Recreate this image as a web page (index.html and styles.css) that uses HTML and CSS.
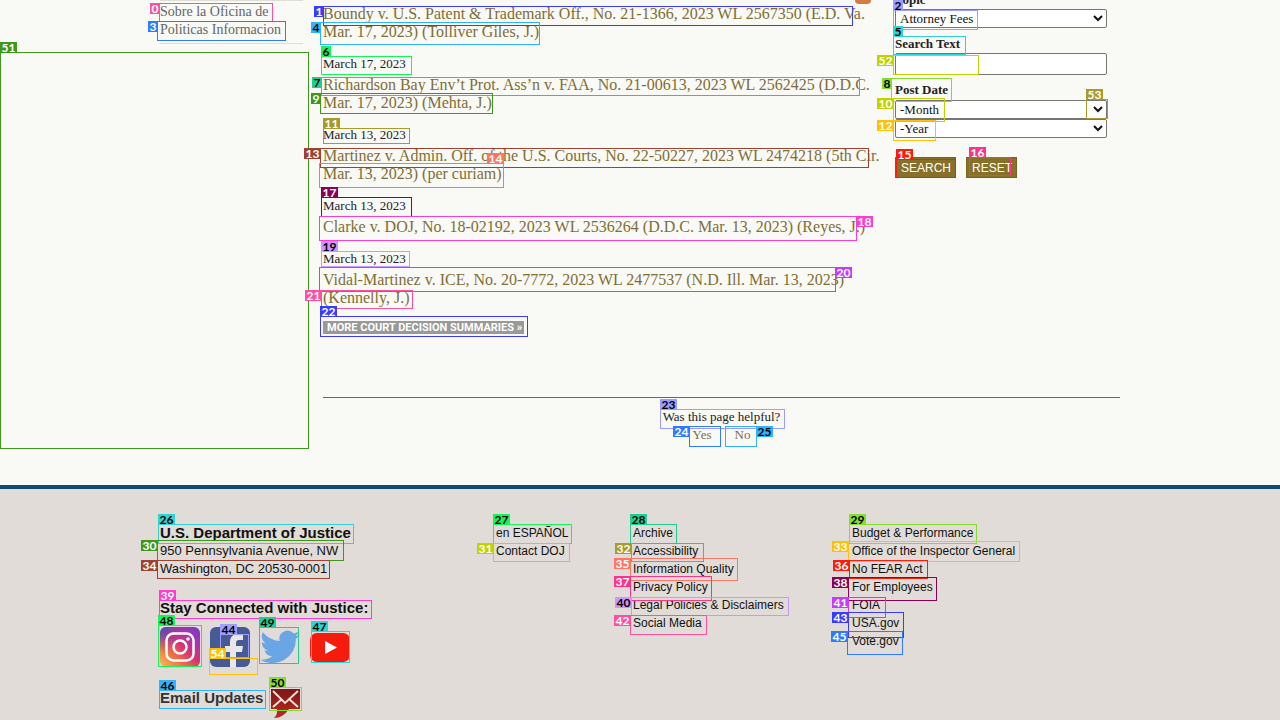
FILE: index.html
```html
<!DOCTYPE html>
<html lang="en">
<head>
<meta charset="utf-8">
<title>Court Decisions</title>
<link rel="stylesheet" href="styles.css">
</head>
<body>
<main class="page">
  <div class="columns">
    <nav class="sidebar">
      <a href="#">Sobre la Oficina de Politicas Informacion</a>
    </nav>
    <section class="decisions">
      <span class="feed"></span>
      <article><a href="#">Boundy v. U.S. Patent &amp; Trademark Off., No. 21-1366, 2023 WL 2567350 (E.D. Va. Mar. 17, 2023) (Tolliver Giles, J.)</a></article>
      <article><time>March 17, 2023</time><a href="#">Richardson Bay Env’t Prot. Ass’n v. FAA, No. 21-00613, 2023 WL 2562425 (D.D.C. Mar. 17, 2023) (Mehta, J.)</a></article>
      <article><time>March 13, 2023</time><a href="#">Martinez v. Admin. Off. of the U.S. Courts, No. 22-50227, 2023 WL 2474218 (5th Cir. Mar. 13, 2023) (per curiam)</a></article>
      <article><time>March 13, 2023</time><a href="#">Clarke v. DOJ, No. 18-02192, 2023 WL 2536264 (D.D.C. Mar. 13, 2023) (Reyes, J.)</a></article>
      <article><time>March 13, 2023</time><a href="#">Vidal-Martinez v. ICE, No. 20-7772, 2023 WL 2477537 (N.D. Ill. Mar. 13, 2023) (Kennelly, J.)</a></article>
      <a class="more" href="#">MORE COURT DECISION SUMMARIES »</a>
    </section>
    <form class="search">
      <label for="topic">Topic</label>
      <select id="topic"><option>Attorney Fees</option></select>
      <label class="text-label" for="text">Search Text</label>
      <input id="text" type="text">
      <label class="date-label" for="month">Post Date</label>
      <select id="month"><option>-Month</option></select>
      <select id="year" aria-label="Year"><option>-Year</option></select>
      <div class="actions">
        <button type="submit">SEARCH</button>
        <button type="reset">RESET</button>
      </div>
    </form>
  </div>
  <div class="feedback">
    <p>Was this page helpful?</p>
    <div class="answers"><a href="#">Yes</a><a href="#">No</a></div>
  </div>
</main>
<footer class="footer">
  <div class="footer-inner">
    <div class="contact">
      <h2>U.S. Department of Justice</h2>
      <p>950 Pennsylvania Avenue, NW</p>
      <p>Washington, DC 20530-0001</p>
      <h2 class="stay">Stay Connected with Justice:</h2>
      <div class="social">
        <a href="#" aria-label="Instagram"><svg viewBox="0 0 40 40">
          <defs>
            <linearGradient id="ig" x1="0" y1="1" x2="1" y2="0"><stop offset="0" stop-color="#fec053"/><stop offset=".3" stop-color="#f2703f"/><stop offset=".55" stop-color="#d93175"/><stop offset=".8" stop-color="#9b36b7"/><stop offset="1" stop-color="#7638c0"/></linearGradient>
            <radialGradient id="igb" cx="0" cy="0" r=".65"><stop offset="0" stop-color="#3b4ec8"/><stop offset="1" stop-color="#7a3bbd" stop-opacity="0"/></radialGradient>
          </defs>
          <rect width="40" height="40" rx="6" fill="url(#ig)"/><rect width="40" height="40" rx="6" fill="url(#igb)"/>
          <rect x="6.500" y="6.500" width="27" height="27" rx="7" fill="none" stroke="#fff" stroke-width="2.500"/>
          <circle cx="20" cy="20" r="6.500" fill="none" stroke="#fff" stroke-width="2.500"/><circle cx="28" cy="12" r="1.800" fill="#fff"/>
        </svg></a>
        <a href="#" aria-label="Facebook"><svg viewBox="0 0 40 40"><rect width="40" height="40" rx="6" fill="#465a93"/><path d="M20 40V25h-5v-6h5v-4c0-5 3-8 8-8h5v6h-4c-2 0-3 1-3 3v3h7l-1 6h-6v15z" fill="#e9e7e8"/></svg></a>
        <a href="#" aria-label="Twitter"><svg viewBox="0 0 24 24"><path fill="#6aa5e5" d="M24 4.600a10 10 0 0 1-2.800.8 5 5 0 0 0 2.100-2.700 10 10 0 0 1-3.100 1.200 4.900 4.900 0 0 0-8.400 4.500A14 14 0 0 1 1.700 3.200a4.900 4.900 0 0 0 1.500 6.500 4.900 4.900 0 0 1-2.200-.6 4.900 4.900 0 0 0 3.900 4.900 5 5 0 0 1-2.200.1 4.900 4.900 0 0 0 4.600 3.400A10 10 0 0 1 0 19.500 14 14 0 0 0 21.500 7.100 10 10 0 0 0 24 4.600z"/></svg></a>
        <a href="#" aria-label="YouTube"><svg viewBox="0 0 40 40"><rect y="6" width="40" height="29" rx="7" fill="#f61c0d"/><path d="M15 14v13l12-6.500z" fill="#fff"/></svg></a>
      </div>
      <a class="email" href="#">Email Updates
        <svg viewBox="0 0 32 32"><defs><linearGradient id="em" x2="0" y2="1"><stop stop-color="#7c1714"/><stop offset="1" stop-color="#c02a22"/></linearGradient></defs>
          <path d="M1 2h29v20H19Q13 31 4 31q4-4 3-9H1z" fill="url(#em)"/>
          <path d="M3 4l12 12L28 4M3 20l9-8M28 20l-9-8" fill="none" stroke="#f6e7e4" stroke-width="1.800"/></svg>
      </a>
    </div>
    <div class="links">
      <a href="#">en ESPAÑOL</a><a href="#">Contact DOJ</a>
    </div>
    <div class="links">
      <a href="#">Archive</a><a href="#">Accessibility</a><a href="#">Information Quality</a><a href="#">Privacy Policy</a><a href="#">Legal Policies &amp; Disclaimers</a><a href="#">Social Media</a>
    </div>
    <div class="links">
      <a href="#">Budget &amp; Performance</a><a href="#">Office of the Inspector General</a><a href="#">No FEAR Act</a><a href="#">For Employees</a><a href="#">FOIA</a><a href="#">USA.gov</a><a href="#">Vote.gov</a>
    </div>
  </div>
</footer>
<div class="marks" id="marks"></div>
<script src="marks.js"></script>
</body>
</html>
```
FILE: styles.css
```css
* { box-sizing: border-box; }

body {
  margin: 0;
  min-height: 100vh;
  display: flex;
  flex-direction: column;
  position: relative;
  overflow: hidden;
  background: #f9f9f5;
  color: #222;
  font: 13px/18px "Liberation Serif", serif;
}

a { text-decoration: none; }
p, h2 { margin: 0; }

.page, .footer-inner {
  width: 100%;
  max-width: 960px;
  margin: 0 auto;
}

.page { padding-bottom: 41px; }

.columns {
  display: grid;
  grid-template-columns: 163px 1fr 225px;
  column-gap: 0;
  align-items: start;
}

.sidebar {
  margin-right: 20px;
  border-top: 1px solid #deded4;
  border-bottom: 1px solid #deded4;
  padding: 2px 20px 4px 0;
  font-size: 14px;
}
.sidebar a { color: #666; }

.decisions {
  position: relative;
  display: flex;
  flex-direction: column;
  gap: 14px;
  padding: 5px 8px 0 0;
}
.decisions article {
  display: flex;
  flex-direction: column;
  gap: 3px;
}
.decisions article a {
  color: #7f6e35;
  font-size: 16px;
}

.feed {
  position: absolute;
  right: 24px;
  top: -12px;
  width: 16px;
  height: 16px;
  border-radius: 4px;
  background: #d37a45;
}

.decisions .more {
  align-self: flex-start;
  padding: 0 2px 0 4px;
  background: #999;
  color: #fff;
  font: bold 11px/13px Roboto, sans-serif;
}

.search {
  display: flex;
  flex-direction: column;
  margin-top: -9px;
  padding-right: 13px;
}
.search label { font-weight: bold; }
.search .text-label { margin-top: 7px; }
.search .date-label { margin: 6px 0 1px; }
.search select, .search input {
  width: 100%;
  height: 19px;
  padding: 0;
  border: 1px solid #767676;
  border-radius: 2px;
  background-color: #fff;
  color: #111;
  font: 13px "Liberation Serif", serif;
}
.search input { height: 22px; }

.actions {
  display: flex;
  gap: 10px;
  margin-top: 19px;
}
.actions button {
  height: 21px;
  padding: 0 4px 0 5px;
  border: 1px solid #7a621c;
  background: #87702a;
  color: #fff;
  font: 12px "Liberation Sans", sans-serif;
}

.feedback {
  margin: 63px 0 0 163px;
  padding-top: 10px;
  border-top: 1px solid #666;
  text-align: center;
}
.answers {
  display: flex;
  justify-content: center;
  gap: 23px;
}
.answers a { color: #7c6a4e; }

.footer {
  flex: 1;
  border-top: 4px solid #114b6f;
  background: #e1dcd7;
  font-family: "Liberation Sans", sans-serif;
  color: #111;
}
.footer-inner {
  display: grid;
  grid-template-columns: 336px 137px 219px 1fr;
  padding-top: 35px;
}
.footer h2 { font-size: 15px; line-height: 18px; }
.footer .stay { margin-top: 21px; }

.social {
  display: flex;
  gap: 10px;
  margin-top: 10px;
}
.social a, .social svg {
  display: block;
  width: 40px;
  height: 40px;
}

.email {
  display: flex;
  gap: 7px;
  margin-top: 20px;
  color: #333;
  font-size: 15px;
  font-weight: bold;
  line-height: 22px;
}
.email svg { width: 32px; height: 32px; }

.links {
  display: flex;
  flex-direction: column;
}
.links a { color: #111; font-size: 12px; }

.marks {
  position: absolute;
  inset: 0;
  pointer-events: none;
}
.mark, .tag { position: absolute; }
.mark { border: 1px solid; }
.tag {
  height: 11px;
  text-align: center;
  font: bold 12px/11px Lato, sans-serif;
  color: #fff;
}
.tag.dark { color: #000; }
```
FILE: marks.js
```javascript
// number, left, top, right, bottom, colour, tag left, tag top, dark digits
const marks = [
  [51, 0, 52, 309, 449, "#3f981a", 0, 42, 0],
  [0, 159, 3, 273, 22, "#ff4fa0", 150, 3, 0],
  [3, 157, 21, 286, 41, "#2f7bff", 148, 21, 0],
  [1, 323, 6, 853, 26, "#3b3bff", 314, 6, 0],
  [4, 320, 22, 540, 45, "#2fb3ff", 311, 22, 1],
  [6, 321, 56, 412, 75, "#14f55a", 321, 46, 1],
  [7, 321, 77, 860, 96, "#1fce93", 312, 77, 1],
  [9, 320, 93, 493, 114, "#3f981a", 311, 93, 0],
  [11, 323, 128, 410, 144, "#a89a2b", 323, 118, 0],
  [13, 320, 148, 869, 168, "#9c4232", 304, 148, 0],
  [14, 319, 163, 504, 188, "#ff7565", 487, 153, 0],
  [17, 321, 197, 412, 217, "#8b0055", 321, 187, 0],
  [18, 319, 216, 857, 241, "#ff3bd0", 856, 216, 0],
  [19, 321, 251, 410, 267, "#cb95ff", 321, 241, 1],
  [20, 319, 267, 836, 292, "#c83aff", 835, 267, 0],
  [21, 321, 290, 413, 309, "#ff4fa0", 305, 290, 0],
  [22, 320, 316, 528, 337, "#3b3bff", 320, 306, 0],
  [23, 660, 409, 785, 429, "#9d9dff", 660, 399, 1],
  [24, 689, 426, 721, 447, "#2f7bff", 673, 426, 0],
  [25, 725, 426, 757, 447, "#2fb3ff", 756, 426, 1],
  [2, 893, 10, 978, 30, "#9d9dff", 893, 0, 1],
  [5, 893, 36, 966, 55, "#2fd3d3", 893, 26, 1],
  [52, 893, 55, 979, 75, "#c0d200", 877, 55, 0],
  [8, 891, 78, 952, 102, "#84dd30", 882, 78, 1],
  [10, 893, 98, 945, 122, "#c0d200", 877, 98, 0],
  [12, 893, 120, 936, 141, "#ffc107", 877, 120, 0],
  [53, 1086, 99, 1108, 119, "#a89a2b", 1086, 89, 0],
  [15, 896, 159, 956, 178, "#ff1a0a", 896, 149, 0],
  [16, 969, 157, 1011, 176, "#ff3385", 969, 147, 0],
  [26, 158, 524, 354, 544, "#2fd3d3", 158, 514, 1],
  [30, 157, 540, 344, 561, "#3f981a", 141, 540, 0],
  [34, 157, 560, 330, 579, "#9c4232", 141, 560, 0],
  [39, 159, 600, 372, 619, "#ff3bd0", 159, 590, 0],
  [48, 158, 625, 202, 667, "#14f55a", 158, 615, 1],
  [44, 220, 634, 249, 658, "#9d9dff", 220, 624, 1],
  [54, 209, 658, 258, 675, "#ffc107", 209, 648, 0],
  [49, 259, 627, 299, 664, "#1fce93", 259, 617, 1],
  [47, 311, 631, 350, 663, "#2fd3d3", 311, 621, 1],
  [46, 159, 690, 266, 709, "#2fb3ff", 159, 680, 1],
  [50, 269, 687, 302, 711, "#84dd30", 269, 677, 1],
  [27, 493, 524, 572, 544, "#14f55a", 493, 514, 1],
  [31, 493, 543, 570, 562, "#c0d200", 477, 543, 0],
  [28, 630, 524, 677, 544, "#1fce93", 630, 514, 1],
  [32, 631, 543, 704, 562, "#a89a2b", 615, 543, 0],
  [35, 630, 558, 738, 581, "#ff7565", 614, 558, 0],
  [37, 630, 576, 712, 601, "#ff3385", 614, 576, 0],
  [40, 631, 597, 789, 616, "#cb95ff", 615, 597, 1],
  [42, 630, 615, 707, 635, "#ff4fa0", 614, 615, 0],
  [29, 849, 524, 977, 544, "#84dd30", 849, 514, 1],
  [33, 848, 541, 1020, 562, "#ffc107", 832, 541, 0],
  [36, 849, 560, 928, 579, "#ff1a0a", 833, 560, 0],
  [38, 848, 577, 937, 601, "#8b0055", 832, 577, 0],
  [41, 848, 597, 886, 618, "#c83aff", 832, 597, 0],
  [43, 848, 612, 904, 638, "#3b3bff", 832, 612, 0],
  [45, 847, 631, 903, 655, "#2f7bff", 831, 631, 0]
];

const layer = document.getElementById("marks");
for (const [n, left, top, right, bottom, color, tagLeft, tagTop, dark] of marks) {
  const box = document.createElement("div");
  box.className = "mark";
  box.style.cssText = `left:${left}px;top:${top}px;width:${right - left}px;height:${bottom - top}px;border-color:${color}`;
  const tag = document.createElement("span");
  tag.className = dark ? "tag dark" : "tag";
  tag.textContent = n;
  tag.style.cssText = `left:${tagLeft}px;top:${tagTop}px;width:${n > 9 ? 17 : 10}px;background:${color}`;
  layer.append(box, tag);
}
```
